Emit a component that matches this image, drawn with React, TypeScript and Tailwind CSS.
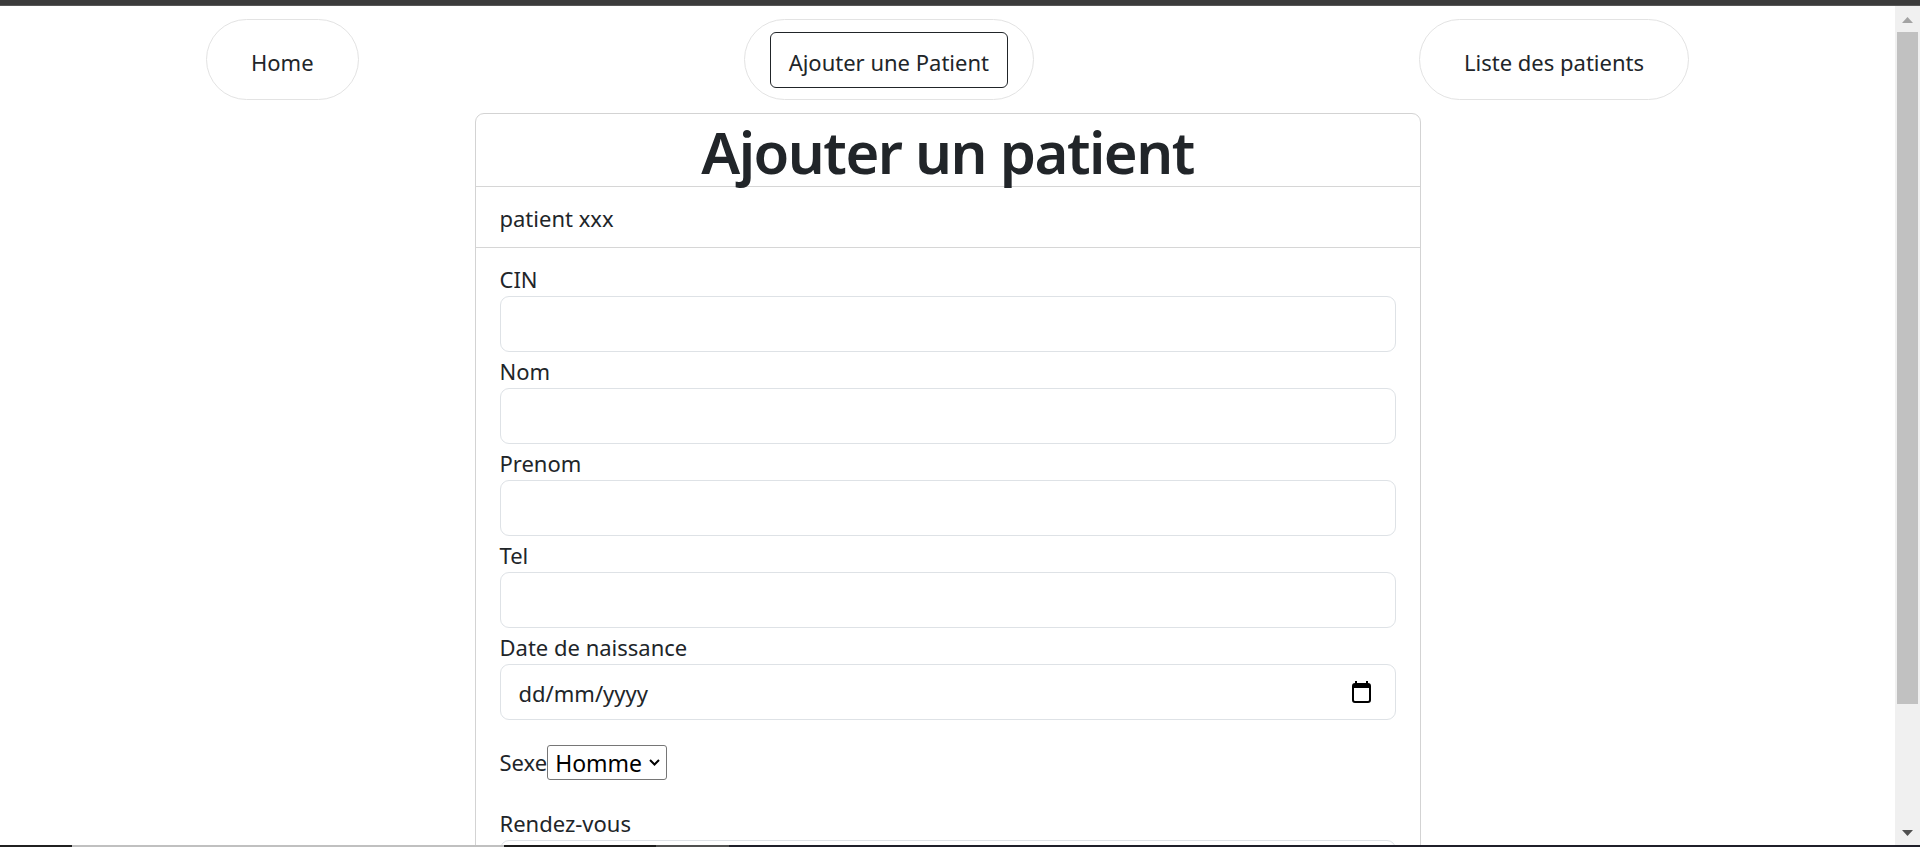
import React from "react";

function NavPill({ label, active }: { label: string; active?: boolean }) {
  return (
    <li className="list-none rounded-full border border-[#e3e3e3] px-[25px] pt-[12px] pb-[11px]">
      <a
        href="#"
        className={
          "block h-[56px] rounded-[6px] border px-[18px] text-[22px] leading-[58px] text-[#212529] no-underline " +
          (active ? "border-[#212529]" : "border-transparent")
        }
      >
        {label}
      </a>
    </li>
  );
}

function Field({ label }: { label: string }) {
  return (
    <div>
      <label className="block h-[36px] text-[22px] leading-[39px] text-[#212529]">{label}</label>
      <input
        type="text"
        className="block h-[56px] w-full rounded-[9px] border border-[#dee2e6] bg-white px-[18px] text-[22px] text-[#212529] outline-none"
      />
    </div>
  );
}

function CalendarIcon() {
  return (
    <svg width="19" height="22" viewBox="0 0 19 22" className="shrink-0">
      <rect x="3" y="0" width="2" height="4" fill="#000" />
      <rect x="14" y="0" width="2" height="4" fill="#000" />
      <rect x="1" y="3" width="17" height="18" rx="2" fill="none" stroke="#000" strokeWidth="2" />
      <rect x="1" y="3" width="17" height="4" fill="#000" />
    </svg>
  );
}

export default function App() {
  return (
    <div className="flex h-[847px] w-full flex-col overflow-hidden bg-white font-['Noto_Sans',sans-serif]">
      <div className="h-[6px] shrink-0 border-b border-[#575757] bg-[#3b3b3b]" />
      <div className="flex min-h-0 flex-1">
        <main className="min-w-0 flex-1 overflow-hidden">
          <ul className="m-0 flex items-start justify-between px-[206px] pt-[13px]">
            <NavPill label="Home" />
            <NavPill label="Ajouter une Patient" active />
            <NavPill label="Liste des patients" />
          </ul>

          <div className="mx-auto mt-[13px] w-[946px] rounded-[9px] border border-[#d3d3d3]">
            <div className="h-[73px] border-b border-[#d6d6d6] text-center">
              <h1 className="pt-[4px] text-[58px] font-semibold leading-[68px] tracking-[-1.5px] text-[#212529]">
                Ajouter un patient
              </h1>
            </div>
            <div className="h-[61px] border-b border-[#d6d6d6] px-[24px] py-[12px]">
              <p className="h-[36px] text-[22px] leading-[39px] text-[#212529]">patient xxx</p>
            </div>
            <form className="px-[24px] pt-[12px]">
              <Field label="CIN" />
              <Field label="Nom" />
              <Field label="Prenom" />
              <Field label="Tel" />
              <div>
                <label className="block h-[36px] text-[22px] leading-[39px] text-[#212529]">Date de naissance</label>
                <div className="flex h-[56px] w-full items-center justify-between rounded-[9px] border border-[#dee2e6] bg-white pl-[18px] pr-[24px]">
                  <span className="h-[36px] text-[22px] leading-[39px] text-[#212529]">dd/mm/yyyy</span>
                  <CalendarIcon />
                </div>
              </div>
              <div className="my-[24px] flex h-[36px] items-center">
                <span className="text-[22px] leading-[39px] text-[#212529]">Sexe</span>
                <div className="relative inline-block">
                  <select className="h-[35px] w-[120px] appearance-none rounded-[3px] border border-[#767676] bg-white pl-[7px] text-[23px] text-black outline-none">
                    <option>Homme</option>
                    <option>Femme</option>
                  </select>
                  <svg
                    width="11"
                    height="7"
                    viewBox="0 0 11 7"
                    className="pointer-events-none absolute right-[7px] top-[14px]"
                  >
                    <path d="M1 1 L5.5 5.5 L10 1" fill="none" stroke="#000" strokeWidth="2" />
                  </svg>
                </div>
              </div>
              <div>
                <label className="block h-[36px] text-[22px] leading-[39px] text-[#212529]">Rendez-vous</label>
                <input
                  type="text"
                  className="block h-[56px] w-full rounded-[9px] border border-[#dee2e6] bg-white px-[18px] text-[22px] outline-none"
                />
              </div>
            </form>
          </div>
        </main>

        <div className="flex w-[25px] shrink-0 flex-col bg-[#f0f0f0]">
          <div className="flex justify-center pt-[11px]">
            <svg width="11" height="6" viewBox="0 0 11 6">
              <path d="M0 6 L5.5 0 L11 6 Z" fill="#a3a3a3" />
            </svg>
          </div>
          <div className="mx-[2px] mt-[9px] h-[672px] bg-[#c1c1c1]" />
          <div className="flex-1" />
          <div className="flex justify-center pb-[9px]">
            <svg width="11" height="6" viewBox="0 0 11 6">
              <path d="M0 0 L11 0 L5.5 6 Z" fill="#505050" />
            </svg>
          </div>
        </div>
      </div>
      <div className="flex h-[2px] shrink-0">
        <div className="w-[72px] bg-[#202020]" />
        <div className="w-[432px] bg-[#c0c0c0]" />
        <div className="w-[152px] bg-[#1c1c1c]" />
        <div className="w-[73px] bg-[#505050]" />
        <div className="flex-1 bg-[#1f1f29]" />
      </div>
    </div>
  );
}
